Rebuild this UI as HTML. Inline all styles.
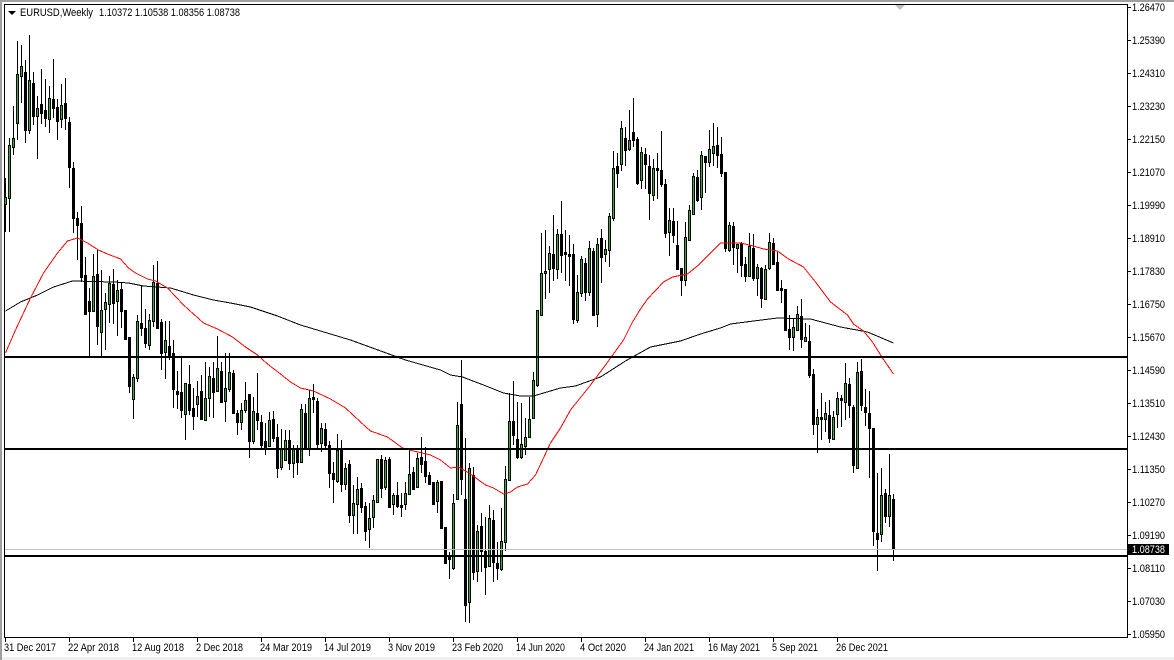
<!DOCTYPE html>
<html><head><meta charset="utf-8"><style>
html,body{margin:0;padding:0;background:#f0f0f0;width:1174px;height:660px;overflow:hidden}
svg{display:block;position:absolute;left:0;top:0}
text{font-family:"Liberation Sans",sans-serif;font-size:11px;fill:#000}
</style></head><body>
<svg width="1174" height="660" viewBox="0 0 1174 660" xmlns="http://www.w3.org/2000/svg">
<rect width="1174" height="660" fill="#fff"/>
<rect y="657" width="1174" height="3" fill="#f0f0f0"/>
<rect width="1174" height="2" fill="#a0a0a0"/>
<rect width="2" height="660" fill="#a0a0a0"/>
<g transform="translate(.5 0)" fill="none" shape-rendering="crispEdges">
<path stroke="#000" d="M5 178V232M9 138V232M13 106V155M17 41V140M21 45V103M25 60V143M29 35V134M33 72V125M37 96V159M41 69V124M45 79V127M49 86V133M53 59V118M57 99V140M61 84V128M65 78V130M69 117V188M73 162V233M77 212V260M81 206V282M85 257V314M89 288V357M93 254V312M97 249V345M101 270V356M105 293V350M109 276V323M113 269V324M117 280V336M121 282V328M125 310V340M129 337V393M133 374V419M137 315V382M141 286V336M145 309V348M149 314V350M153 265V327M157 261V328M161 319V370M165 321V379M169 321V360M173 340V408M177 371V409M181 357V418M185 383V440M189 365V415M193 388V430M197 381V417M201 375V420M205 362V420M209 367V417M213 362V418M217 336V391M221 362V403M225 353V422M229 353V392M233 370V413M237 410V435M241 403V430M245 382V413M249 394V458M253 397V444M257 373V430M261 415V448M265 423V455M269 412V446M273 411V442M277 424V478M281 429V470M285 430V460M289 430V470M293 445V478M297 445V475M301 404V462M305 404V448M309 390V456M313 384V413M317 398V448M321 423V452M325 423V448M329 441V488M333 462V503M337 434V483M341 440V492M345 463V490M349 460V523M353 485V534M357 477V534M361 483V513M365 502V541M369 503V548M373 495V528M377 459V502M381 455V498M385 457V490M389 457V507M393 493V515M397 482V508M401 493V517M405 482V510M409 450V494M413 467V489M417 453V487M421 437V473M425 447V483M429 472V485M433 482V505M437 480V513M441 481V528M445 527V563M449 552V579M453 494V570M457 402V500M461 360V495M465 438V622M469 463V623M473 467V580M477 525V582M481 513V572M485 517V595M489 505V567M493 510V582M497 542V580M501 508V571M505 466V551M509 393V480M513 381V445M517 402V459M521 403V459M525 418V455M529 397V437M533 372V418M537 310V387M541 233V315M545 230V299M549 246V293M553 215V281M557 229V279M561 201V273M565 230V281M569 235V286M573 244V324M577 275V323M581 256V297M585 258V301M589 241V296M593 248V316M597 238V327M601 229V283M605 240V262M609 213V267M613 151V221M617 153V188M621 121V171M625 127V166M629 110V151M633 98V147M637 137V185M641 147V189M645 148V189M649 155V220M653 159V201M657 153V199M661 131V187M665 179V238M669 208V256M673 208V243M677 221V269M681 268V296M685 222V286M689 205V240M693 173V214M697 170V202M701 151V210M705 156V193M709 130V167M713 123V166M717 127V168M721 137V177M725 172V252M729 222V252M733 222V265M737 244V273M741 242V277M745 257V282M749 233V276M753 234V281M757 264V296M761 267V308M765 265V299M769 233V270M773 238V265M777 252V290M781 280V303M785 289V330M789 315V350M793 319V351M797 306V330M801 299V348M805 323V341M809 325V378M813 369V435M817 409V453M821 393V440M825 402V432M829 400V443M833 411V439M837 392V428M841 395V427M845 363V420M849 378V418M853 405V473M857 362V468M861 359V411M865 389V426M869 391V478M873 428V546M877 473V571M881 468V542M885 489V523M889 454V527M893 494V561"/>
<path stroke="#000" stroke-width="3" d="M5 197V205M9 145V199M13 138V148M17 74V124M21 66V77M25 72V131M29 80V131M33 83V117M37 108V117M41 104V114M45 110V119M49 98V120M53 99V109M57 107V122M61 105V120M65 103V119M69 122V168M73 168V219M77 218V226M81 223V278M85 275V315M89 301V312M93 276V312M97 274V327M101 310V333M105 302V310M109 283V305M113 284V304M117 290V302M121 289V312M125 310V340M129 337V387M133 377V400M137 321V379M141 323V329M145 328V344M149 320V346M153 282V322M157 283V329M161 322V354M165 340V353M169 346V356M173 353V390M177 391V395M181 392V411M185 383V415M189 384V411M193 408V417M197 396V405M201 391V420M205 398V421M209 376V399M213 378V393M217 368V392M221 371V403M225 388V402M229 372V390M233 373V414M237 413V423M241 410V423M245 400V411M249 394V442M253 411V442M257 413V421M261 422V446M265 441V448M269 420V447M273 419V439M277 437V469M281 448V468M285 440V461M289 440V464M293 449V464M297 448V463M301 409V463M305 413V449M309 398V449M313 397V400M317 401V445M321 428V444M325 429V446M329 445V474M333 473V480M337 450V482M341 449V485M345 468V485M349 464V516M353 503V516M357 489V505M361 488V508M365 506V532M369 518V530M373 500V518M377 459V503M381 459V489M385 460V488M389 459V508M393 495V505M397 495V507M401 505V508M405 493V505M409 474V495M413 472V490M417 458V488M421 457V465M425 461V477M429 475V485M433 482V505M437 482V502M441 481V529M445 527V564M449 557V560M453 503V569M457 425V500M461 404V480M465 499V606M469 468V603M473 475V573M477 531V572M481 526V552M485 551V568M489 518V567M493 520V563M497 563V569M501 541V570M505 479V543M509 421V481M513 421V436M517 439V458M521 444V458M525 437V447M529 419V438M533 380V419M537 310V386M541 273V316M545 271V274M549 253V270M553 254V269M557 234V270M561 234V256M565 252V255M569 254V257M573 254V320M577 292V321M581 259V294M585 263V293M589 248V293M593 251V316M597 244V315M601 238V258M605 249V255M609 216V251M613 168V219M617 166V174M621 128V165M625 138V151M629 140V150M633 132V141M637 139V184M641 152V181M645 154V165M649 166V194M653 168V196M657 168V171M661 170V185M665 184V234M669 220V233M673 221V236M677 245V270M681 268V281M685 237V281M689 210V241M693 176V215M697 177V201M701 155V198M705 156V163M709 149V163M713 146V154M717 145V156M721 154V174M725 172V249M729 225V251M733 226V248M737 244V249M741 243V266M745 264V277M749 246V277M753 248V279M757 267V279M761 268V299M765 269V300M769 242V269M773 243V265M777 262V291M781 288V291M785 289V331M789 329V338M793 327V338M797 314V331M801 316V340M805 337V342M809 341V376M813 374V425M817 417V425M821 417V420M825 413V420M829 415V439M833 417V440M837 398V415M841 398V401M845 383V403M849 384V406M853 407V466M857 372V469M861 371V406M865 407V413M869 413V429M873 428V532M877 533V540M881 495V535M885 493V517M889 495V517M893 499V550"/>
<path stroke="#18c018" d="M5 198V204M9 146V198M13 139V147M17 75V123M21 67V76M29 81V130M37 109V116M49 99V119M61 106V119M93 277V311M101 311V332M105 303V309M109 284V304M117 291V301M133 378V399M137 322V378M149 321V345M153 283V321M165 341V352M185 384V414M197 397V404M205 399V420M209 377V398M217 369V391M225 389V401M229 373V389M241 411V422M245 401V410M253 412V441M269 421V446M281 449V467M285 441V460M293 450V463M301 410V462M309 399V448M321 429V443M337 451V481M345 469V484M353 504V515M357 490V504M369 519V529M373 501V517M377 460V502M385 461V487M393 496V504M405 494V504M409 475V494M417 459V487M437 483V501M453 504V568M457 426V499M469 469V602M477 532V571M489 519V566M501 542V569M505 480V542M509 422V480M521 445V457M525 438V446M529 420V437M533 381V418M537 311V385M541 274V315M545 272V273M549 254V269M557 235V269M577 293V320M581 260V293M589 249V292M597 245V314M605 250V254M609 217V250M613 169V218M621 129V164M629 141V149M641 153V180M653 169V195M669 221V232M685 238V280M689 211V240M693 177V214M701 156V197M709 150V162M713 147V153M729 226V250M737 245V248M749 247V276M757 268V278M765 270V299M769 243V268M793 328V337M797 315V330M805 338V341M817 418V424M825 414V419M833 418V439M837 399V414M845 384V402M857 373V468M881 496V534M889 496V516"/>
<path stroke="#000" d="M5 311L20 302L37 295L53 287L72 281L113 282L128 283L143 286L170 288L193 295L213 300L230 303L250 307L277 316L300 325L350 340L405 360L440 370L450 375L462 377L483 385L503 393L520 396L533 396L560 388L575 386L600 377L625 361L650 347L680 341L700 334L720 328L730 324L753 321L777 318L810 319L840 327L867 332L893 343"/>
<path stroke="#f00" d="M5 353L15 330L30 298L43 273L57 253L67 241L77 238L87 243L98 250L107 254L120 259L128 268L135 273L147 279L155 281L167 288L183 305L203 323L217 329L232 337L245 347L257 355L267 364L280 374L290 382L300 388L313 391L330 399L345 408L360 422L370 431L387 437L402 448L413 451L430 455L440 460L450 468L458 467L470 474L485 485L493 488L503 494L510 492L517 487L527 484L535 475L543 458L550 443L560 428L570 410L590 385L605 365L623 340L632 322L640 309L647 299L663 282L672 277L687 274L698 265L720 243L740 243L753 246L763 249L777 251L788 259L803 267L815 282L830 302L847 315L853 324L863 331L872 342L882 358L893 374"/>
</g>
<g shape-rendering="crispEdges">
<rect x="5" y="549" width="1122" height="1" fill="#c0c0c0"/>
<rect x="5" y="356" width="1122" height="2" fill="#000"/>
<rect x="5" y="448" width="1122" height="2" fill="#000"/>
<rect x="5" y="555" width="1122" height="2" fill="#000"/>
<rect x="4" y="4" width="1124" height="1" fill="#000"/>
<rect x="4" y="4" width="1" height="634" fill="#000"/>
<rect x="4" y="637" width="1124" height="1" fill="#000"/>
<rect x="1127" y="4" width="1" height="634" fill="#000"/>
<path stroke="#000" fill="none" d="M1128 7.5H1131M1128 40.5H1131M1128 73.5H1131M1128 106.5H1131M1128 139.5H1131M1128 172.5H1131M1128 205.5H1131M1128 238.5H1131M1128 271.5H1131M1128 304.5H1131M1128 337.5H1131M1128 370.5H1131M1128 403.5H1131M1128 436.5H1131M1128 469.5H1131M1128 502.5H1131M1128 535.5H1131M1128 568.5H1131M1128 601.5H1131M1128 634.5H1131M5.5 638V642M69.5 638V642M133.5 638V642M197.5 638V642M261.5 638V642M325.5 638V642M389.5 638V642M453.5 638V642M517.5 638V642M581.5 638V642M645.5 638V642M709.5 638V642M773.5 638V642M837.5 638V642"/>
<rect x="1127" y="544" width="42" height="11" fill="#000"/>
</g>
<path d="M8 11H16L12 15Z" fill="#000"/>
<path d="M895 5H905L900 10Z" fill="#c0c0c0"/>
<text x="20" y="16" textLength="73" lengthAdjust="spacingAndGlyphs">EURUSD,Weekly</text>
<text x="99" y="16" textLength="141" lengthAdjust="spacingAndGlyphs">1.10372 1.10538 1.08356 1.08738</text>
<g>
<text x="1132" y="11" textLength="33" lengthAdjust="spacingAndGlyphs">1.26470</text>
<text x="1132" y="44" textLength="33" lengthAdjust="spacingAndGlyphs">1.25390</text>
<text x="1132" y="77" textLength="33" lengthAdjust="spacingAndGlyphs">1.24310</text>
<text x="1132" y="110" textLength="33" lengthAdjust="spacingAndGlyphs">1.23230</text>
<text x="1132" y="143" textLength="33" lengthAdjust="spacingAndGlyphs">1.22150</text>
<text x="1132" y="176" textLength="33" lengthAdjust="spacingAndGlyphs">1.21070</text>
<text x="1132" y="209" textLength="33" lengthAdjust="spacingAndGlyphs">1.19990</text>
<text x="1132" y="242" textLength="33" lengthAdjust="spacingAndGlyphs">1.18910</text>
<text x="1132" y="275" textLength="33" lengthAdjust="spacingAndGlyphs">1.17830</text>
<text x="1132" y="308" textLength="33" lengthAdjust="spacingAndGlyphs">1.16750</text>
<text x="1132" y="341" textLength="33" lengthAdjust="spacingAndGlyphs">1.15670</text>
<text x="1132" y="374" textLength="33" lengthAdjust="spacingAndGlyphs">1.14590</text>
<text x="1132" y="407" textLength="33" lengthAdjust="spacingAndGlyphs">1.13510</text>
<text x="1132" y="440" textLength="33" lengthAdjust="spacingAndGlyphs">1.12430</text>
<text x="1132" y="473" textLength="33" lengthAdjust="spacingAndGlyphs">1.11350</text>
<text x="1132" y="506" textLength="33" lengthAdjust="spacingAndGlyphs">1.10270</text>
<text x="1132" y="539" textLength="33" lengthAdjust="spacingAndGlyphs">1.09190</text>
<text x="1132" y="553" textLength="33" lengthAdjust="spacingAndGlyphs" style="fill:#fff">1.08738</text>
<text x="1132" y="572" textLength="33" lengthAdjust="spacingAndGlyphs">1.08110</text>
<text x="1132" y="605" textLength="33" lengthAdjust="spacingAndGlyphs">1.07030</text>
<text x="1132" y="638" textLength="33" lengthAdjust="spacingAndGlyphs">1.05950</text>
</g>
<g>
<text x="4" y="651" textLength="52" lengthAdjust="spacingAndGlyphs">31 Dec 2017</text>
<text x="68" y="651" textLength="51" lengthAdjust="spacingAndGlyphs">22 Apr 2018</text>
<text x="132" y="651" textLength="52" lengthAdjust="spacingAndGlyphs">12 Aug 2018</text>
<text x="196" y="651" textLength="47" lengthAdjust="spacingAndGlyphs">2 Dec 2018</text>
<text x="260" y="651" textLength="52" lengthAdjust="spacingAndGlyphs">24 Mar 2019</text>
<text x="324" y="651" textLength="47" lengthAdjust="spacingAndGlyphs">14 Jul 2019</text>
<text x="388" y="651" textLength="47" lengthAdjust="spacingAndGlyphs">3 Nov 2019</text>
<text x="452" y="651" textLength="51" lengthAdjust="spacingAndGlyphs">23 Feb 2020</text>
<text x="516" y="651" textLength="49" lengthAdjust="spacingAndGlyphs">14 Jun 2020</text>
<text x="580" y="651" textLength="46" lengthAdjust="spacingAndGlyphs">4 Oct 2020</text>
<text x="644" y="651" textLength="50" lengthAdjust="spacingAndGlyphs">24 Jan 2021</text>
<text x="708" y="651" textLength="52" lengthAdjust="spacingAndGlyphs">16 May 2021</text>
<text x="772" y="651" textLength="46" lengthAdjust="spacingAndGlyphs">5 Sep 2021</text>
<text x="836" y="651" textLength="52" lengthAdjust="spacingAndGlyphs">26 Dec 2021</text>
</g>
</svg>
</body></html>
